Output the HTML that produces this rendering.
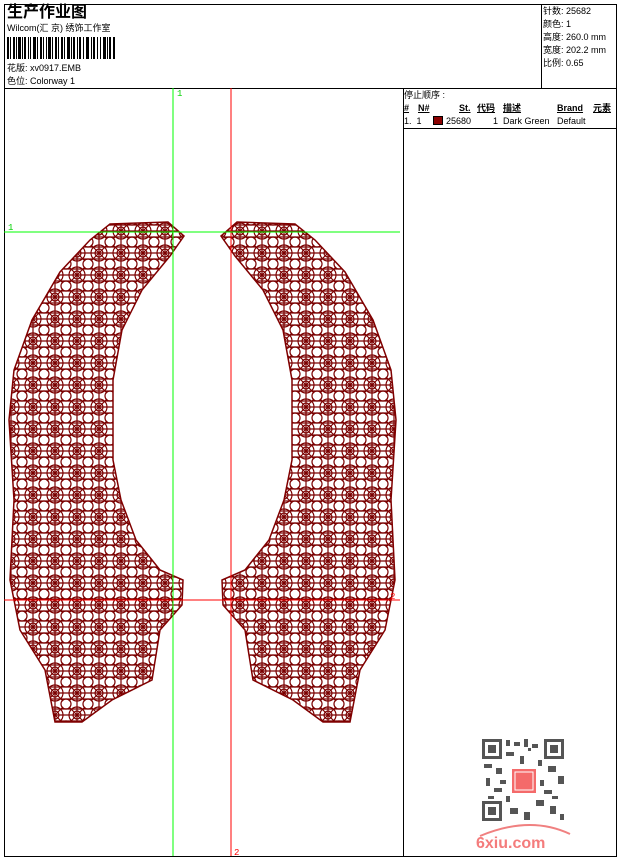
<!DOCTYPE html>
<html><head><meta charset="utf-8"><style>
body{margin:0;background:#fff;width:620px;height:860px;overflow:hidden;position:relative;font-family:"Liberation Sans","Noto Sans CJK SC",sans-serif;}
.a{position:absolute}
.t{font-size:9px;color:#000;white-space:nowrap;line-height:11px}
</style></head><body>
<div class="a" style="left:4px;top:4px;width:611px;height:851px;border:1px solid #000;"></div>
<div class="a" style="left:4px;top:88px;width:612px;height:1px;background:#000"></div>
<div class="a" style="left:541px;top:4px;width:1px;height:84px;background:#000"></div>
<div class="a" style="left:403px;top:88px;width:1px;height:768px;background:#000"></div>
<div class="a" style="left:403px;top:128px;width:213px;height:1px;background:#000"></div>
<div class="a" style="left:7px;top:3px;font-size:16px;font-weight:bold;line-height:20px">生产作业图</div>
<div class="a t" style="left:7px;top:23px">Wilcom(汇 京) 绣饰工作室</div>
<svg class="a" style="left:7px;top:37px" width="110" height="22">
<g fill="#000">
<rect x="0" y="0" width="2" height="22"/><rect x="3" y="0" width="1" height="22"/><rect x="6" y="0" width="2" height="22"/><rect x="9" y="0" width="1" height="22"/><rect x="11" y="0" width="3" height="22"/><rect x="15" y="0" width="1" height="22"/><rect x="17" y="0" width="2" height="22"/><rect x="21" y="0" width="1" height="22"/><rect x="23" y="0" width="1" height="22"/><rect x="26" y="0" width="3" height="22"/><rect x="30" y="0" width="1" height="22"/><rect x="33" y="0" width="2" height="22"/><rect x="36" y="0" width="1" height="22"/><rect x="39" y="0" width="1" height="22"/><rect x="41" y="0" width="3" height="22"/><rect x="45" y="0" width="1" height="22"/><rect x="48" y="0" width="2" height="22"/><rect x="51" y="0" width="1" height="22"/><rect x="54" y="0" width="2" height="22"/><rect x="57" y="0" width="1" height="22"/><rect x="60" y="0" width="3" height="22"/><rect x="64" y="0" width="1" height="22"/><rect x="66" y="0" width="2" height="22"/><rect x="70" y="0" width="1" height="22"/><rect x="72" y="0" width="2" height="22"/><rect x="76" y="0" width="1" height="22"/><rect x="79" y="0" width="3" height="22"/><rect x="84" y="0" width="1" height="22"/><rect x="86" y="0" width="2" height="22"/><rect x="90" y="0" width="1" height="22"/><rect x="93" y="0" width="1" height="22"/><rect x="96" y="0" width="3" height="22"/><rect x="100" y="0" width="1" height="22"/><rect x="102" y="0" width="2" height="22"/><rect x="106" y="0" width="2" height="22"/>
</g></svg>
<div class="a t" style="left:7px;top:63px">花版: xv0917.EMB</div>
<div class="a t" style="left:7px;top:76px">色位: Colorway 1</div>
<div class="a t" style="left:543px;top:6px">针数: 25682</div>
<div class="a t" style="left:543px;top:19px">颜色: 1</div>
<div class="a t" style="left:543px;top:32px">高度: 260.0 mm</div>
<div class="a t" style="left:543px;top:45px">宽度: 202.2 mm</div>
<div class="a t" style="left:543px;top:58px">比例: 0.65</div>
<div class="a t" style="left:404px;top:90px">停止顺序 :</div>
<div class="a t" style="left:404px;top:103px;font-weight:bold;text-decoration:underline">#</div>
<div class="a t" style="left:418px;top:103px;font-weight:bold;text-decoration:underline">N#</div>
<div class="a t" style="left:459px;top:103px;font-weight:bold;text-decoration:underline">St.</div>
<div class="a t" style="left:477px;top:103px;font-weight:bold;text-decoration:underline">代码</div>
<div class="a t" style="left:503px;top:103px;font-weight:bold;text-decoration:underline">描述</div>
<div class="a t" style="left:557px;top:103px;font-weight:bold;text-decoration:underline">Brand</div>
<div class="a t" style="left:593px;top:103px;font-weight:bold;text-decoration:underline">元素</div>
<div class="a t" style="left:404px;top:116px">1.&nbsp; 1</div>
<div class="a" style="left:433px;top:116px;width:10px;height:9px;background:#8b0000;border:1px solid #000;box-sizing:border-box"></div>
<div class="a t" style="left:446px;top:116px">25680</div>
<div class="a t" style="left:493px;top:116px">1&nbsp; Dark Green</div>
<div class="a t" style="left:557px;top:116px">Default</div>
<svg class="a" style="left:0;top:0" width="620" height="860">
<defs>
<pattern id="p" width="22" height="22" patternUnits="userSpaceOnUse">
<g fill="none" stroke="#7a0000" stroke-width="1.2">
<circle cx="11" cy="11" r="8"/><circle cx="11" cy="11" r="4"/><circle cx="0" cy="0" r="5"/><circle cx="22" cy="0" r="5"/><circle cx="0" cy="22" r="5"/><circle cx="22" cy="22" r="5"/>
<path d="M0 11H22M11 0V22M3 3L19 19M19 3L3 19M0 5H22M0 17H22"/>
</g></pattern>
<path id="L" d="M110 224 L168 222 L184 236 L170 256 L142 290 L122 330 L113 380 L113 460 L121 500 L136 540 L160 570 L183 580 L182 605 L160 630 L152 680 L112 700 L82 722 L55 722 L45 670 L20 630 L10 580 L14 500 L9 420 L14 370 L32 320 L60 272 L90 240 Z"/>
</defs>
<use href="#L" fill="url(#p)" stroke="#800000" stroke-width="1.5"/>
<use href="#L" fill="url(#p)" stroke="#800000" stroke-width="1.5" transform="translate(405,0) scale(-1,1)"/>
<g shape-rendering="crispEdges">
<line x1="173" y1="88" x2="173" y2="856" stroke="#00ff00" stroke-width="1"/>
<line x1="231" y1="88" x2="231" y2="856" stroke="#ff0000" stroke-width="1"/>
<line x1="4" y1="232" x2="400" y2="232" stroke="#00ff00" stroke-width="1"/>
<line x1="4" y1="600" x2="400" y2="600" stroke="#ff0000" stroke-width="1"/>
</g>
<text x="177" y="96" font-size="9" fill="#00d000" font-family="Liberation Mono,monospace">1</text>
<text x="8" y="230" font-size="9" fill="#00d000" font-family="Liberation Mono,monospace">1</text>
<text x="390" y="599" font-size="9" fill="#f00" font-family="Liberation Mono,monospace">2</text>
<text x="234" y="855" font-size="9" fill="#f00" font-family="Liberation Mono,monospace">2</text>
<g fill="#555">
<rect x="482" y="739" width="20" height="20"/><rect x="485" y="742" width="14" height="14" fill="#fff"/><rect x="488" y="745" width="8" height="8"/>
<rect x="544" y="739" width="20" height="20"/><rect x="547" y="742" width="14" height="14" fill="#fff"/><rect x="550" y="745" width="8" height="8"/>
<rect x="482" y="801" width="20" height="20"/><rect x="485" y="804" width="14" height="14" fill="#fff"/><rect x="488" y="807" width="8" height="8"/>
<rect x="506" y="740" width="4" height="6"/><rect x="514" y="742" width="6" height="4"/><rect x="524" y="739" width="4" height="8"/><rect x="532" y="744" width="6" height="4"/>
<rect x="484" y="764" width="8" height="4"/><rect x="496" y="768" width="6" height="6"/><rect x="506" y="752" width="8" height="4"/><rect x="520" y="756" width="4" height="8"/>
<rect x="486" y="778" width="4" height="8"/><rect x="494" y="788" width="8" height="4"/><rect x="548" y="766" width="8" height="6"/><rect x="558" y="776" width="6" height="8"/>
<rect x="544" y="790" width="8" height="4"/><rect x="510" y="808" width="8" height="6"/><rect x="524" y="812" width="6" height="8"/><rect x="536" y="800" width="8" height="6"/>
<rect x="550" y="806" width="6" height="8"/><rect x="560" y="814" width="4" height="6"/><rect x="506" y="796" width="4" height="6"/><rect x="538" y="760" width="4" height="6"/>
<rect x="488" y="796" width="6" height="3"/><rect x="528" y="748" width="3" height="3"/><rect x="552" y="796" width="6" height="3"/><rect x="500" y="780" width="6" height="4"/><rect x="540" y="780" width="4" height="6"/>
</g>
<rect x="512" y="769" width="24" height="24" fill="#f46a6a"/>
<rect x="515" y="772" width="18" height="18" fill="none" stroke="#fff" stroke-width="1"/>
<path d="M480 836 Q530 815 570 834" fill="none" stroke="#f08080" stroke-width="2"/>
<text x="476" y="848" font-size="16" font-weight="bold" fill="#f47c7c" font-family="Liberation Sans,sans-serif">6xiu.com</text>
</svg>
</body></html>
